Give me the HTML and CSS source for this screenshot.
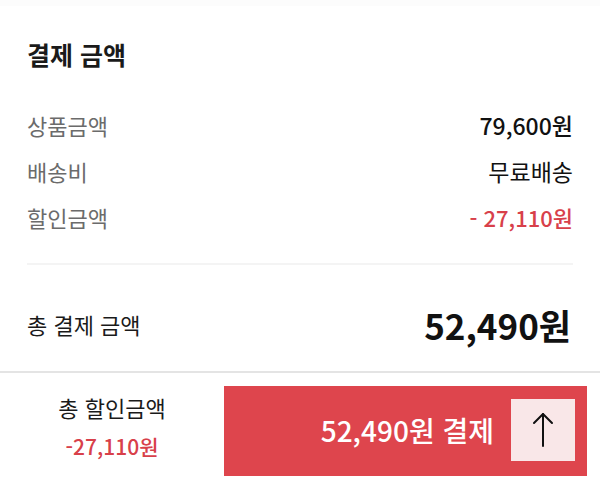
FILE: index.html
```html
<!DOCTYPE html>
<html lang="ko">
<head>
    <meta charset="UTF-8">
    <meta name="viewport" content="width=device-width, initial-scale=1.0">
    <title>결제 금액</title>
    <link rel="stylesheet" href="styles.css">
</head>
<body>

<div class="summary">
    <h2>결제 금액</h2>
    <div class="rows">
        <div class="row">
            <span class="label">상품금액</span>
            <span class="value">79,600원</span>
        </div>
        <div class="row">
            <span class="label">배송비</span>
            <span class="value light">무료배송</span>
        </div>
        <div class="row">
            <span class="label">할인금액</span>
            <span class="value red">- 27,110원</span>
        </div>
    </div>
    <div class="total">
        <span class="total-label">총 결제 금액</span>
        <span class="total-value">52,490원</span>
    </div>
</div>

<div class="paybar">
    <div class="discount">
        <div class="discount-label">총 할인금액</div>
        <div class="discount-value">-27,110원</div>
    </div>
    <button class="pay">
        <span>52,490원 결제</span>
        <span class="up">
            <svg width="22" height="36" viewBox="0 0 22 36" fill="none" stroke="#111" stroke-width="2" stroke-linecap="round" stroke-linejoin="round">
                <path d="M11 2 V34"/>
                <path d="M2 11 L11 2 L20 11"/>
            </svg>
        </span>
    </button>
</div>

</body>
</html>
```

FILE: styles.css
```css
body {
    font-family: "Noto Sans CJK KR", "Noto Sans", sans-serif;
    background-color: #fff;
    color: #111;
    margin: 0;
    width: 600px;
    height: 477px;
    overflow: hidden;
}

.summary {
    padding: 0 27px;
    border-top: 6px solid #fcfcfc;
}

.summary h2 {
    margin: 0;
    padding-top: 31px;
    font-size: 25px;
    font-weight: bold;
    line-height: 34px;
    color: #1a1a1a;
}

.rows {
    margin-top: 31px;
    padding-bottom: 23px;
    border-bottom: 2px solid #f4f4f4;
}

.row {
    display: flex;
    justify-content: space-between;
    align-items: center;
    height: 46px;
}

.row .label {
    font-size: 22px;
    color: #6b6b6b;
}

.row .value {
    font-size: 23px;
    font-weight: 500;
    color: #111;
}

.row .value.light {
    font-weight: normal;
}

.row .value.red {
    font-size: 22px;
    color: #d8404a;
}

.total {
    display: flex;
    justify-content: space-between;
    align-items: center;
    height: 94px;
    padding-top: 12px;
}

.total-label {
    font-size: 22px;
    color: #1a1a1a;
}

.total-value {
    font-size: 35px;
    font-weight: bold;
    margin-right: 2px;
}

.paybar {
    display: flex;
    border-top: 2px solid #e4e4e4;
    padding-top: 13px;
}

.discount {
    width: 224px;
    text-align: center;
    padding-top: 6px;
}

.discount-label {
    font-size: 22px;
    color: #1a1a1a;
    line-height: 30px;
}

.discount-value {
    margin-top: 9px;
    font-size: 21px;
    font-weight: 500;
    color: #d8404a;
    line-height: 30px;
}

.pay {
    width: 363px;
    height: 90px;
    border: none;
    background-color: #de454d;
    color: white;
    font-family: inherit;
    font-size: 28px;
    font-weight: 500;
    display: flex;
    justify-content: flex-end;
    align-items: flex-start;
    gap: 17px;
    padding: 13px 12px 0 0;
    cursor: pointer;
}

.pay > span:first-child {
    line-height: 62px;
}

.up {
    width: 64px;
    height: 62px;
    background-color: #f9e7e8;
    display: flex;
    justify-content: center;
    align-items: center;
}
```
